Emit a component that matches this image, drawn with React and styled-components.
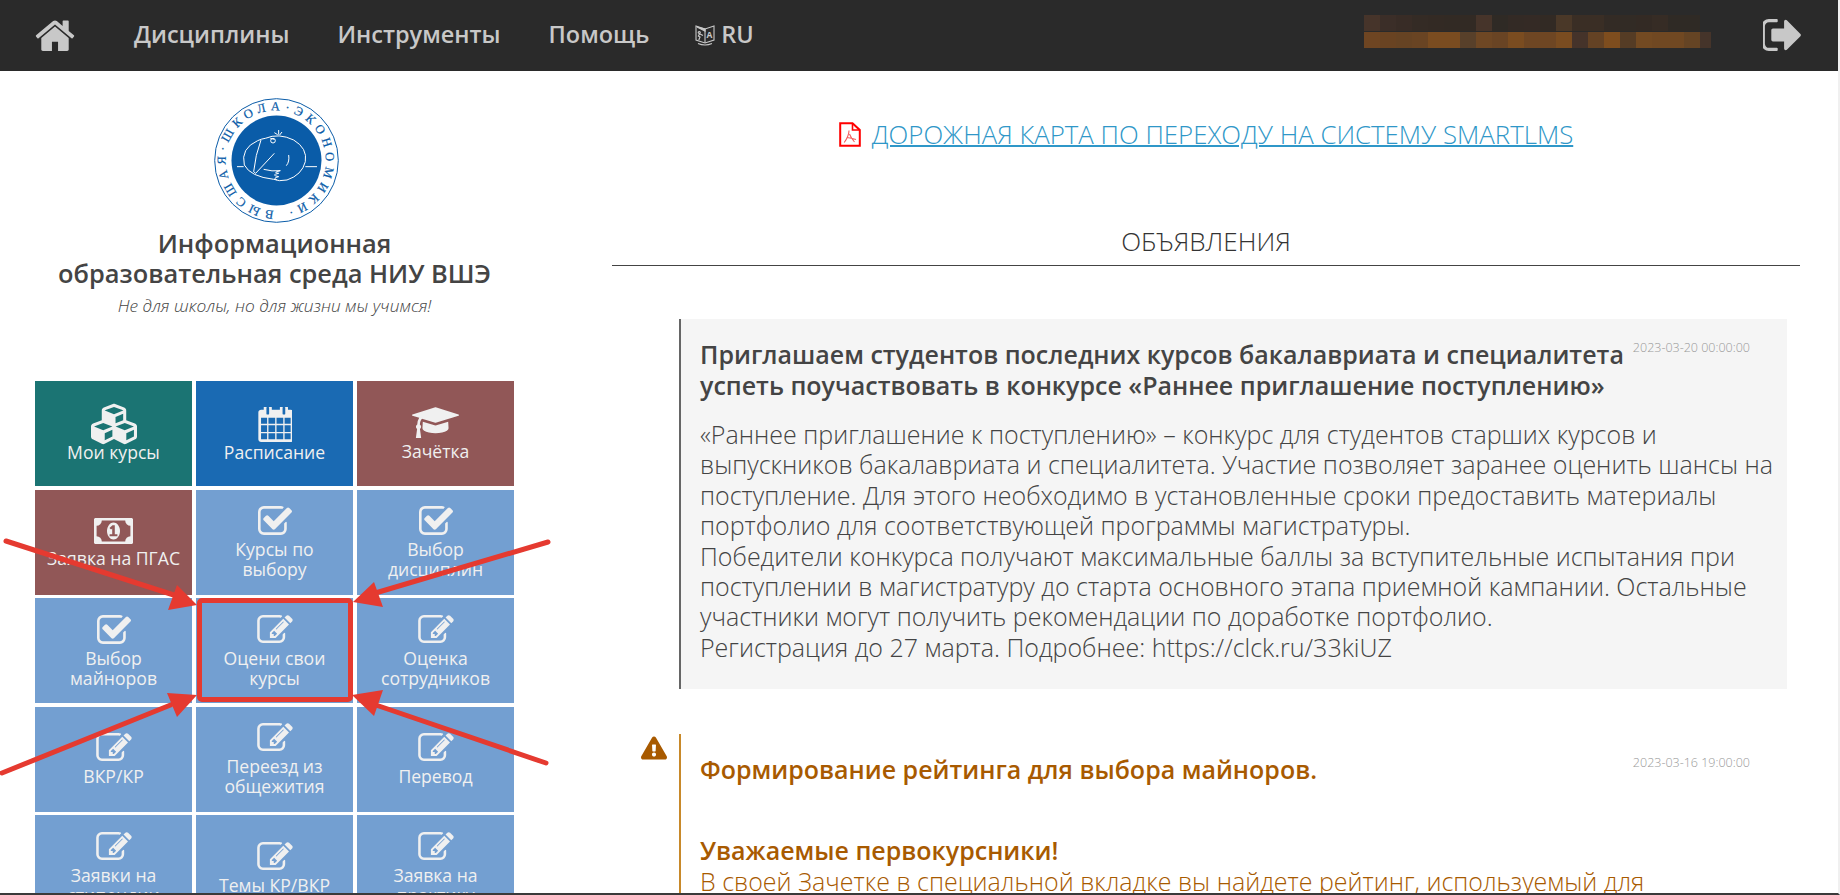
import React from 'react';
import styled, { createGlobalStyle } from 'styled-components';
import { FaCubes, FaExclamationTriangle } from 'react-icons/fa';

const GlobalStyle = createGlobalStyle`
  html, body {
    margin: 0;
    padding: 0;
    background: #fff;
    overflow: hidden;
    font-family: "Open Sans", "Noto Sans", sans-serif;
  }
`;

const Frame = styled.div`
  position: relative;
  width: 1840px;
  height: 895px;
  box-sizing: border-box;
  overflow: hidden;
  display: flex;
  flex-direction: column;
  border-right: 2px solid #f0f0f0;
  border-bottom: 2px solid #3a3a3a;
`;

const Navbar = styled.nav`
  flex: none;
  height: 71px;
  background: #2a2a2a;
  display: flex;
  align-items: center;
  color: #c8c8c8;
`;

const HomeLink = styled.a`
  display: flex;
  margin-left: 35px;
  margin-right: 59px;
  margin-top: -2px;
`;

const NavItem = styled.a`
  font-size: 23.5px;
  font-weight: 600;
  line-height: 30px;
  margin-right: 48px;
  margin-top: -3px;
  color: #c8c8c8;
  white-space: nowrap;
`;

const LangItem = styled.a`
  display: flex;
  align-items: center;
  gap: 6px;
  font-size: 23.5px;
  font-weight: 600;
  line-height: 30px;
  margin-top: -3px;
  margin-left: -2px;
  color: #c8c8c8;
`;

const UserBlur = styled.div`
  margin-left: auto;
  width: 347px;
  display: flex;
  flex-direction: column;
  gap: 1px;
  margin-top: -9px;
`;

const BlurRow = styled.div`
  display: flex;
  height: 16px;
`;

const BlurCell = styled.span`
  flex: ${(p) => (p.$narrow ? '0 0 11px' : '0 0 15.99px')};
  background: ${(p) => p.$color};
`;

const LogoutLink = styled.a`
  display: flex;
  margin-left: 52px;
  margin-right: 36px;
  margin-top: -2px;
`;

const Main = styled.main`
  flex: 1;
  min-height: 0;
  overflow: hidden;
  display: flex;
`;

const Sidebar = styled.aside`
  flex: none;
  width: 479px;
  margin-left: 35px;
  display: flex;
  flex-direction: column;
  align-items: center;
  padding-top: 27px;
  color: #444;
`;

const Logo = styled.svg`
  flex: none;
  display: block;
  margin-left: 3px;
`;

const SiteTitle = styled.h1`
  margin: 5px 0 0;
  font-size: 25.4px;
  font-weight: 550;
  line-height: 30px;
  text-align: center;
  color: #444;
  white-space: nowrap;
`;

const Motto = styled.div`
  margin-top: 7px;
  font-size: 17.3px;
  font-weight: 300;
  font-style: italic;
  line-height: 22px;
  color: #444;
`;

const TileGrid = styled.div`
  margin-top: 64px;
  width: 100%;
  display: grid;
  grid-template-columns: repeat(3, 157px);
  grid-auto-rows: 105px;
  column-gap: 4px;
  row-gap: 3.5px;
`;

const Tile = styled.a`
  box-sizing: border-box;
  padding-top: 1px;
  background: ${(p) => p.$bg};
  color: #f0f0f0;
  display: flex;
  flex-direction: column;
  align-items: center;
  justify-content: center;
  text-align: center;
  font-size: 17.6px;
  line-height: 20px;
`;

const TileIcon = styled.div`
  height: ${(p) => p.$h}px;
  display: flex;
  align-items: flex-start;
  justify-content: center;
  margin-bottom: ${(p) => p.$gap}px;
`;

const Content = styled.section`
  flex: none;
  width: 1188px;
  margin-left: 98px;
  padding-top: 46px;
`;

const RoadmapRow = styled.div`
  display: flex;
  justify-content: center;
  align-items: center;
  gap: 11px;
  height: 34px;
`;

const RoadmapLink = styled.a`
  font-size: 25.8px;
  font-weight: 300;
  line-height: 34px;
  color: #2f97c8;
  text-decoration: underline;
  text-decoration-thickness: 2px;
  white-space: nowrap;
`;

const SectionTitle = styled.h2`
  margin: 75px 0 0;
  padding-bottom: 9px;
  border-bottom: 1.5px solid #444;
  font-size: 26px;
  font-weight: 300;
  line-height: 30px;
  text-align: center;
  color: #333;
`;

const Announcements = styled.div`
  padding: 53px 13px 0 67px;
`;

const Notice = styled.article`
  position: relative;
  background: ${(p) => (p.$warn ? 'transparent' : '#f5f5f5')};
  border-left: 2px solid ${(p) => (p.$warn ? '#c8892a' : '#666')};
  margin-bottom: 45px;
  padding: 20px 37px 27px 19px;
  color: ${(p) => (p.$warn ? '#a85a00' : '#444')};
`;

const NoticeHead = styled.div`
  display: flex;
  align-items: flex-start;
`;

const NoticeTitle = styled.h3`
  margin: ${(p) => p.$top || 0}px 0 0;
  font-size: 25px;
  font-weight: 600;
  line-height: 31px;
  white-space: nowrap;
`;

const NoticeDate = styled.time`
  margin-left: auto;
  font-size: 12.5px;
  font-weight: 300;
  line-height: 18px;
  color: #999;
  white-space: nowrap;
`;

const NoticeBody = styled.p`
  margin: ${(p) => p.$top}px 0 0;
  font-size: 25px;
  font-weight: 300;
  line-height: 30.4px;
  white-space: nowrap;
`;

const WarnBadge = styled.div`
  position: absolute;
  left: -40px;
  top: 1px;
  color: #a85a00;
  display: flex;
`;

const Annotations = styled.svg`
  position: absolute;
  left: 0;
  top: 0;
  pointer-events: none;
`;

const Highlight = styled.div`
  position: absolute;
  left: 197px;
  top: 598px;
  width: 156px;
  height: 104px;
  box-sizing: border-box;
  border: 5px solid #e53a30;
  border-radius: 5px;
`;

const Fa4 = ({ d, box, w, h }) => (
  <svg width={w} height={h} viewBox={box} fill="currentColor" style={{ display: 'block' }}>
    <path d={d} />
  </svg>
);

const HOME = 'M1472 992v480q0 26-19 45t-45 19h-384v-384h-256v384h-384q-26 0-45-19t-19-45v-480q0-1 .5-3t.5-3l575-474 575 474q1 2 1 6zm223-69l-62 74q-8 9-21 11h-3q-13 0-21-7l-692-577-692 577q-12 8-24 7-13-2-21-11l-62-74q-8-10-7-23.5t11-21.5l719-599q32-26 76-26t76 26l244 204v-195q0-14 9-23t23-9h192q14 0 23 9t9 23v408l219 182q10 8 11 21.5t-7 23.5z';
const SIGN_OUT = 'M704 1440q0 4 1 20t.5 26.5-3 23.5-10 19.5-20.5 6.5h-320q-119 0-203.5-84.5t-84.5-203.5v-704q0-119 84.5-203.5t203.5-84.5h320q13 0 22.5 9.5t9.5 22.5q0 4 1 20t.5 26.5-3 23.5-10 19.5-20.5 6.5h-320q-66 0-113 47t-47 113v704q0 66 47 113t113 47h312l11.5 1 11.5 3 8 5.5 7 9 2 13.5zm928-544q0 26-19 45l-544 544q-19 19-45 19t-45-19-19-45v-288h-448q-26 0-45-19t-19-45v-384q0-26 19-45t45-19h448v-288q0-26 19-45t45-19 45 19l544 544q19 19 19 45z';
const CHECK = 'M1472 930v318q0 119-84.5 203.5t-203.5 84.5h-832q-119 0-203.5-84.5t-84.5-203.5v-832q0-119 84.5-203.5t203.5-84.5h832q63 0 117 25 15 7 18 23 3 17-9 29l-49 49q-10 10-23 10-3 0-9-2-23-6-45-6h-832q-66 0-113 47t-47 113v832q0 66 47 113t113 47h832q66 0 113-47t47-113v-254q0-13 9-22l64-64q10-10 23-10 6 0 12 3 20 8 20 29zm231-489l-814 814q-24 24-57 24t-57-24l-430-430q-24-24-24-57t24-57l110-110q24-24 57-24t57 24l263 263 647-647q24-24 57-24t57 24l110 110q24 24 24 57t-24 57z';
const PENCIL = 'M888 1184l116-116-152-152-116 116v56h96v96h56zm440-720q-16-16-33 1l-350 350q-17 17-1 33t33-1l350-350q17-17 1-33zm80 594v190q0 119-84.5 203.5t-203.5 84.5h-832q-119 0-203.5-84.5t-84.5-203.5v-832q0-119 84.5-203.5t203.5-84.5h832q63 0 117 25 15 7 18 23 3 17-9 29l-49 49q-14 14-32 8-23-6-45-6h-832q-66 0-113 47t-47 113v832q0 66 47 113t113 47h832q66 0 113-47t47-113v-126q0-13 9-22l64-64q15-15 35-7t20 29zm-96-738l288 288-672 672h-288v-288zm444 132l-92 92-288-288 92-92q28-28 68-28t68 28l152 152q28 28 28 68t-28 68z';
const CALENDAR = 'M192 1664h288v-288h-288v288zm352 0h320v-288h-320v288zm-352-352h288v-320h-288v320zm352 0h320v-320h-320v320zm-352-384h288v-288h-288v288zm736 736h320v-288h-320v288zm-384-736h320v-288h-320v288zm768 736h288v-288h-288v288zm-384-352h320v-320h-320v320zm-352-864v-288q0-13-9.5-22.5t-22.5-9.5h-64q-13 0-22.5 9.5t-9.5 22.5v288q0 13 9.5 22.5t22.5 9.5h64q13 0 22.5-9.5t9.5-22.5zm736 864h288v-320h-288v320zm-384-384h320v-288h-320v288zm384 0h288v-288h-288v288zm32-480v-288q0-13-9.5-22.5t-22.5-9.5h-64q-13 0-22.5 9.5t-9.5 22.5v288q0 13 9.5 22.5t22.5 9.5h64q13 0 22.5-9.5t9.5-22.5zm384-64v1280q0 52-38 90t-90 38h-1408q-52 0-90-38t-38-90v-1280q0-52 38-90t90-38h128v-96q0-66 47-113t113-47h64q66 0 113 47t47 113v96h384v-96q0-66 47-113t113-47h64q66 0 113 47t47 113v96h128q52 0 90 38t38 90z';
const MONEY = 'M768 1152h384v-96h-128v-448h-114l-148 137 77 80q42-37 55-57h2v288h-128v96zm512-256q0 70-21 142t-59.5 134-101.5 101-138 39-138-39-101.5-101-59.5-134-21-142 21-142 59.5-134 101.5-101 138-39 138 39 101.5 101 59.5 134 21 142zm512 256v-512q-106 0-181-75t-75-181h-1152q0 106-75 181t-181 75v512q106 0 181 75t75 181h1152q0-106 75-181t181-75zm128-832v1152q0 26-19 45t-45 19h-1792q-26 0-45-19t-19-45v-1152q0-26 19-45t45-19h1792q26 0 45 19t19 45z';
const CAP = 'M1774 836l18 316q4 69-82 128t-235 93.5-323 34.5-323-34.5-235-93.5-82-128l18-316 574 181q22 7 48 7t48-7zm530-324q0 23-22 31l-1120 352q-4 1-10 1t-10-1l-652-206q-43 34-71 111.5t-34 178.5q63 36 63 109 0 69-58 107l58 433q2 14-8 25-9 11-24 11h-192q-15 0-24-11-10-11-8-25l58-433q-58-38-58-107 0-73 65-111 11-207 98-330l-333-104q-22-8-22-31t22-31l1120-352q4-1 10-1t10 1l1120 352q22 8 22 31z';

const iconCheck = <Fa4 d={CHECK} box="64 128 1664 1408" w={34} h={29} />;
const iconPencil = <Fa4 d={PENCIL} box="0 128 1792 1408" w={36} h={28} />;

const GREEN = '#1b7473';
const BLUE = '#1a6ab3';
const BROWN = '#915757';
const LIGHT = '#739fd1';

const tiles = [
  { bg: GREEN, icon: <FaCubes size={46} style={{ marginTop: -6 }} />, h: 35, gap: 0, lines: ['Мои курсы'] },
  { bg: BLUE, icon: <Fa4 d={CALENDAR} box="0 128 1664 1664" w={35} h={35} />, h: 35, gap: 0, lines: ['Расписание'] },
  { bg: BROWN, icon: <Fa4 d={CAP} box="0 128 2304 1500" w={47} h={31} />, h: 31, gap: 3, lines: ['Зачётка'] },
  { bg: BROWN, icon: <Fa4 d={MONEY} box="0 256 1920 1280" w={39} h={26} />, h: 26, gap: 4, lines: ['Заявка на ПГАС'] },
  { bg: LIGHT, icon: iconCheck, h: 29, gap: 4, lines: ['Курсы по', 'выбору'] },
  { bg: LIGHT, icon: iconCheck, h: 29, gap: 4, lines: ['Выбор', 'дисциплин'] },
  { bg: LIGHT, icon: iconCheck, h: 29, gap: 4, lines: ['Выбор', 'майноров'] },
  { bg: LIGHT, icon: iconPencil, h: 28, gap: 5, lines: ['Оцени свои', 'курсы'] },
  { bg: LIGHT, icon: iconPencil, h: 28, gap: 5, lines: ['Оценка', 'сотрудников'] },
  { bg: LIGHT, icon: iconPencil, h: 28, gap: 5, lines: ['ВКР/КР'] },
  { bg: LIGHT, icon: iconPencil, h: 28, gap: 5, lines: ['Переезд из', 'общежития'] },
  { bg: LIGHT, icon: iconPencil, h: 28, gap: 5, lines: ['Перевод'] },
  { bg: LIGHT, icon: iconPencil, h: 28, gap: 5, lines: ['Заявки на', 'стипендии'] },
  { bg: LIGHT, icon: iconPencil, h: 28, gap: 5, lines: ['Темы КР/ВКР'] },
  { bg: LIGHT, icon: iconPencil, h: 28, gap: 5, lines: ['Заявка на', 'практику'] },
];

const blurTop = ['#46342a', '#3b2e28', '#382c26', '#342b25', '#332a24', '#322a24', '#322a24', '#46342a', '#2f2a25', '#332a25', '#342a25', '#322a24', '#4a3828', '#3a2e25', '#3a2e25', '#332b25', '#322b25', '#332a24', '#362c25', '#2f2a25', '#2f2a25'];
const blurBottom = ['#6e4522', '#694322', '#664323', '#694423', '#7a4c20', '#7a4c20', '#58402a', '#6e4724', '#694424', '#7a4c20', '#6e4623', '#6e4623', '#7a4c20', '#45332a', '#644224', '#7e4d1e', '#553c25', '#734a22', '#704822', '#704822', '#654424'];

const LangIcon = () => (
  <svg width="20" height="24" viewBox="0 0 20 24" fill="none" stroke="currentColor" strokeWidth="1.1" style={{ display: 'block' }}>
    <path d="M1 4l9 3 9-3v14l-9 3-9-3z" />
    <path d="M10 7v14M3 21.5q7 3 14 0" />
    <path d="M2 5l8 4V7z" fill="currentColor" />
    <path d="M4.2 9.5a1 1 0 1 0 .1 0zM5 11l-1.6 3 1.6 1-1.2 3M5 12l3 1.5" strokeWidth="1.2" />
    <text x="11.6" y="16" fontSize="8.5" fontWeight="700" fill="currentColor" stroke="none" fontFamily="Open Sans">A</text>
  </svg>
);

const PdfIcon = () => (
  <svg width="22" height="25" viewBox="0 0 22 25" fill="none" stroke="#f00" style={{ display: 'block' }}>
    <path d="M1.2 1.2H13.5L20.8 8V23.8H1.2z" strokeWidth="2" />
    <path d="M13.5 1.5V8H20.5" strokeWidth="1.6" />
    <path d="M10 8.5Q10 14 5.2 20.5M8 15.5Q12 16 17 17.5M10.5 12Q12 16 15.5 20" strokeWidth="1.1" stroke="#f45a5a" />
  </svg>
);

const HseLogo = () => (
  <Logo width="125" height="125" viewBox="0 0 125 125">
    <circle cx="62.5" cy="62.5" r="61.8" fill="#fff" stroke="#0a5ca8" strokeWidth="1" />
    <circle cx="62.5" cy="62.5" r="45" fill="#0a5ca8" />
    <defs>
      <path id="ring" d="M60 112.5A50 50 0 1 1 63.5 112.5" />
    </defs>
    <text fontFamily="Liberation Serif" fontSize="12.5" fill="#0a5ca8" stroke="#0a5ca8" strokeWidth=".2" letterSpacing="4.6">
      <textPath href="#ring">ВЫСШАЯ·ШКОЛА·ЭКОНОМИКИ·</textPath>
    </text>
    <g transform="translate(23 22) scale(.3333)" fill="none" stroke="#fff" strokeWidth="3">
      <path d="M0 140H20M205 140H240" />
      <path d="M85 55Q125 38 170 60Q212 85 205 125Q195 165 150 180Q125 185 110 178Q40 170 22 135Q10 85 62 62Q75 56 85 55" />
      <path d="M72 60Q55 105 50 155L56 160L112 100" />
      <circle cx="108" cy="62" r="7" />
      <path d="M100 55L112 58M112 38L122 44M125 30V44M135 36L128 45" />
      <path d="M155 105Q158 125 148 137" />
      <path d="M80 148Q105 155 130 152Q105 158 125 160Q100 165 125 170Q105 175 120 180" />
    </g>
  </Logo>
);

const ARROWS = [
  { tail: '6,541', line: '180,597', head: '197,605 177,585 168,610' },
  { tail: '548,542', line: '372,594', head: '353,602 374,582 383,607' },
  { tail: '2,773', line: '178,702', head: '197,695 167,693 177,717' },
  { tail: '546,763', line: '370,703', head: '352,695 383,690 374,716' },
];

const App = () => (
  <Frame>
    <GlobalStyle />
    <Navbar>
      <HomeLink><Fa4 d={HOME} box="96 192 1600 1344" w={40} h={32} /></HomeLink>
      <NavItem>Дисциплины</NavItem>
      <NavItem>Инструменты</NavItem>
      <NavItem>Помощь</NavItem>
      <LangItem><LangIcon />RU</LangItem>
      <UserBlur>
        <BlurRow>{blurTop.map((c, i) => <BlurCell key={i} $color={c} />)}</BlurRow>
        <BlurRow>
          {blurBottom.map((c, i) => <BlurCell key={i} $color={c} />)}
          <BlurCell $narrow $color="#45342a" />
        </BlurRow>
      </UserBlur>
      <LogoutLink><Fa4 d={SIGN_OUT} box="160 256 1472 1280" w={39} h={32} /></LogoutLink>
    </Navbar>
    <Main>
      <Sidebar>
        <HseLogo />
        <SiteTitle>Информационная<br />образовательная среда НИУ ВШЭ</SiteTitle>
        <Motto>Не для школы, но для жизни мы учимся!</Motto>
        <TileGrid>
          {tiles.map((t) => (
            <Tile key={t.lines.join(' ')} $bg={t.bg}>
              <TileIcon $h={t.h} $gap={t.gap}>{t.icon}</TileIcon>
              {t.lines.map((l) => <div key={l}>{l}</div>)}
            </Tile>
          ))}
        </TileGrid>
      </Sidebar>
      <Content>
        <RoadmapRow>
          <PdfIcon />
          <RoadmapLink>ДОРОЖНАЯ КАРТА ПО ПЕРЕХОДУ НА СИСТЕМУ SMARTLMS</RoadmapLink>
        </RoadmapRow>
        <SectionTitle>ОБЪЯВЛЕНИЯ</SectionTitle>
        <Announcements>
          <Notice>
            <NoticeHead>
              <NoticeTitle>
                Приглашаем студентов последних курсов бакалавриата и специалитета<br />
                успеть поучаствовать в конкурсе «Раннее приглашение поступлению»
              </NoticeTitle>
              <NoticeDate>2023-03-20 00:00:00</NoticeDate>
            </NoticeHead>
            <NoticeBody $top={18}>
              «Раннее приглашение к поступлению» – конкурс для студентов старших курсов и<br />
              выпускников бакалавриата и специалитета. Участие позволяет заранее оценить шансы на<br />
              поступление. Для этого необходимо в установленные сроки предоставить материалы<br />
              портфолио для соответствующей программы магистратуры.<br />
              Победители конкурса получают максимальные баллы за вступительные испытания при<br />
              поступлении в магистратуру до старта основного этапа приемной кампании. Остальные<br />
              участники могут получить рекомендации по доработке портфолио.<br />
              Регистрация до 27 марта. Подробнее: https://clck.ru/33kiUZ
            </NoticeBody>
          </Notice>
          <Notice $warn>
            <WarnBadge><FaExclamationTriangle size={26} /></WarnBadge>
            <NoticeHead>
              <NoticeTitle>Формирование рейтинга для выбора майноров.</NoticeTitle>
              <NoticeDate>2023-03-16 19:00:00</NoticeDate>
            </NoticeHead>
            <NoticeTitle $top={50}>Уважаемые первокурсники!</NoticeTitle>
            <NoticeBody $top={0}>В своей Зачетке в специальной вкладке вы найдете рейтинг, используемый для</NoticeBody>
          </Notice>
        </Announcements>
      </Content>
    </Main>
    <Highlight />
    <Annotations width="1840" height="895" viewBox="0 0 1840 895">
      {ARROWS.map((a) => {
        const [x1, y1] = a.tail.split(',');
        const [x2, y2] = a.line.split(',');
        return (
          <g key={a.tail}>
            <line x1={x1} y1={y1} x2={x2} y2={y2} stroke="#e53a30" strokeWidth="5" strokeLinecap="round" />
            <polygon points={a.head} fill="#e53a30" />
          </g>
        );
      })}
    </Annotations>
  </Frame>
);

export default App;
